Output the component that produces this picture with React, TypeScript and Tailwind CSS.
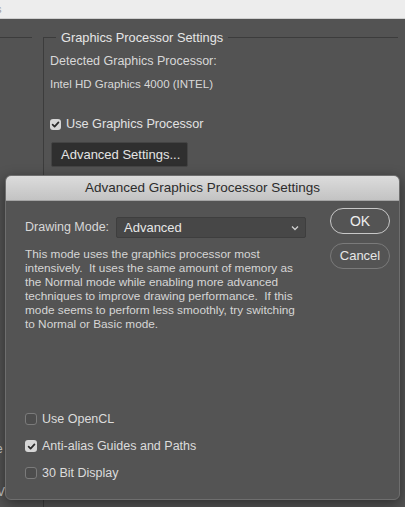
import React from 'react';

const font = { fontFamily: '"Liberation Sans", Arial, sans-serif' };

function Check({ checked, size = 'w-[12px] h-[12px]' }: { checked: boolean; size?: string }) {
  return checked ? (
    <span className={`${size} rounded-[3px] bg-[#d6d6d6] flex items-center justify-center shrink-0`}>
      <svg width="9" height="9" viewBox="0 0 10 10" fill="none">
        <path d="M1.8 5.2 4 7.4 8.3 2.6" stroke="#2a2a2a" strokeWidth="1.9" strokeLinecap="round" strokeLinejoin="round" />
      </svg>
    </span>
  ) : (
    <span className={`${size} rounded-[3px] border border-[#7b7b7b] bg-[#4d4d4d] shrink-0`} />
  );
}

function Option({ checked, label }: { checked: boolean; label: string }) {
  return (
    <div className="flex items-center gap-[5px] h-[14px]">
      <Check checked={checked} />
      <span className="text-[12.5px] text-[#dcdcdc]">{label}</span>
    </div>
  );
}

export default function App() {
  const desc = [
    'This mode uses the graphics processor most',
    'intensively.  It uses the same amount of memory as',
    'the Normal mode while enabling more advanced',
    'techniques to improve drawing performance.  If this',
    'mode seems to perform less smoothly, try switching',
    'to Normal or Basic mode.',
  ];

  return (
    <div className="relative w-[405px] h-[507px] overflow-hidden bg-[#535353]" style={font}>
      {/* window strip */}
      <div className="h-[19px] bg-[#ededed] border-b border-[#cfcfcf] text-[11px] text-[#9a9a9a] leading-[19px] -ml-[4px]">s</div>

      <div className="flex pt-[18px]">
        {/* left preferences column */}
        <div className="w-[32px] shrink-0 border-t border-[#3c3c3c] h-[470px] relative text-[12px] text-[#cfcfcf]">
          <div className="mt-[402px] -ml-[4px]">e</div>
          <div className="mt-[14px] -ml-[4px] leading-[14px]">r</div>
          <div className="-ml-[3px] leading-[12px]">V</div>
        </div>

        {/* graphics group */}
        <div className="ml-[11px] flex-1 mr-[7px] border-l border-[#3c3c3c]">
          <div className="flex items-center -mt-[9px]">
            <div className="w-[12px] border-t border-[#3c3c3c]" />
            <span className="px-[5px] text-[12.8px] text-[#e6e6e6]">Graphics Processor Settings</span>
            <div className="flex-1 border-t border-[#3c3c3c]" />
          </div>
          <div className="pl-[6px]">
            <div className="mt-[5px] text-[12.5px] text-[#d8d8d8]">Detected Graphics Processor:</div>
            <div className="mt-[5px] text-[11.5px] text-[#d8d8d8]">Intel HD Graphics 4000 (INTEL)</div>
            <div className="mt-[22px] flex items-center gap-[5px]">
              <Check checked size="w-[11px] h-[11px]" />
              <span className="text-[12.7px] text-[#e2e2e2]">Use Graphics Processor</span>
            </div>
            <button className="mt-[8px] ml-[1px] w-[137px] h-[25px] bg-[#2f2f2f] border border-[#444] rounded-[2px] text-left pl-[9px] text-[13px] text-[#e4e4e4]">
              Advanced Settings...
            </button>
          </div>
        </div>
      </div>

      {/* dialog */}
      <div className="absolute left-[5px] top-[175px] w-[395px] h-[325px] rounded-[6px] border border-[#6e6e6e] bg-[#545454] shadow-[0_4px_14px_rgba(0,0,0,0.45)] flex flex-col overflow-hidden">
        <div className="h-[25px] shrink-0 bg-gradient-to-b from-[#dcdcdc] to-[#c3c3c3] border-b border-[#a5a5a5] flex items-center justify-center text-[13.5px] text-[#2c2c2c]">
          Advanced Graphics Processor Settings
        </div>
        <div className="flex flex-1 pl-[19px] pr-[9px]">
          <div className="flex-1 flex flex-col">
            <div className="mt-[16px] flex items-center">
              <span className="text-[12.5px] text-[#d8d8d8] w-[91px]">Drawing Mode:</span>
              <div className="w-[190px] h-[21px] bg-[#474747] border border-[#3e3e3e] rounded-[2px] flex items-center justify-between pl-[7px] pr-[6px]">
                <span className="text-[13px] text-[#e6e6e6]">Advanced</span>
                <svg width="8" height="6" viewBox="0 0 8 6" fill="none">
                  <path d="M1 1.5 4 4.5 7 1.5" stroke="#d0d0d0" strokeWidth="1.3" />
                </svg>
              </div>
            </div>
            <div className="mt-[9px] text-[11.8px] leading-[14px] text-[#d6d6d6] whitespace-pre">
              {desc.map((l) => (
                <div key={l}>{l}</div>
              ))}
            </div>
            <div className="mt-auto mb-[19px] flex flex-col gap-[13px]">
              <Option checked={false} label="Use OpenCL" />
              <Option checked label="Anti-alias Guides and Paths" />
              <Option checked={false} label="30 Bit Display" />
            </div>
          </div>
          <div className="w-[60px] flex flex-col gap-[9px] mt-[7px]">
            <button className="h-[26px] rounded-full border border-[#c8c8c8] text-[14px] text-[#eeeeee]">OK</button>
            <button className="h-[26px] rounded-full border border-[#7a7a7a] text-[13px] text-[#e6e6e6]">Cancel</button>
          </div>
        </div>
      </div>
    </div>
  );
}
